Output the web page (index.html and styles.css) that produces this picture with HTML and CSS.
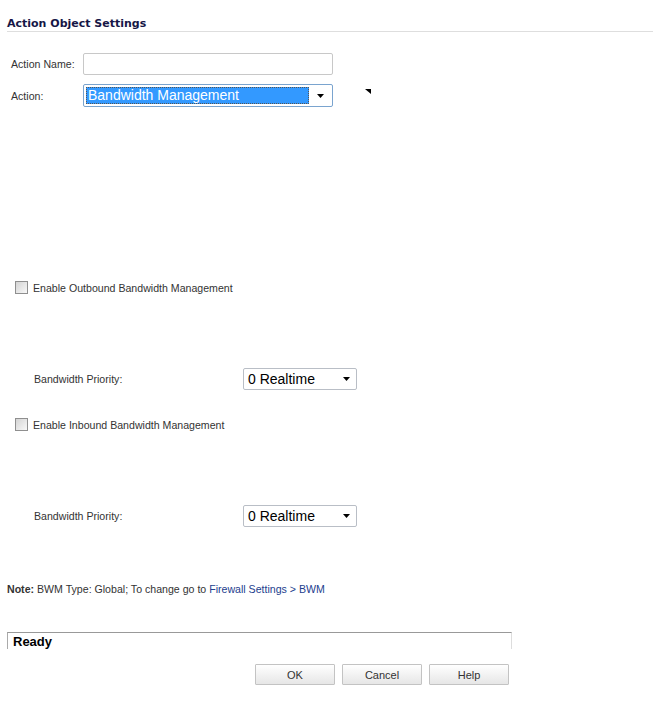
FILE: index.html
```html
<!DOCTYPE html>
<html lang="en">
<head>
  <meta charset="UTF-8">
  <title>Action Object Settings</title>
  <link rel="stylesheet" href="styles.css">
</head>
<body>
  <div class="page">
    <h1 class="title">Action Object Settings</h1>

    <div class="row row-name">
      <span class="label">Action Name:</span>
      <div class="text-input"></div>
    </div>
    <div class="row row-action">
      <span class="label">Action:</span>
      <div class="select select-wide">
        <span class="select-value selected">Bandwidth Management</span>
        <svg class="arrow" width="7" height="4" viewBox="0 0 7 4"><path d="M0 0h7L3.5 4z" fill="#000"/></svg>
      </div>
      <svg class="marker" width="6" height="5" viewBox="0 0 6 5"><path d="M0 0h6v5z" fill="#000"/></svg>
    </div>

    <div class="check-row check-out">
      <span class="checkbox"></span>
      <span class="check-label">Enable Outbound Bandwidth Management</span>
    </div>
    <div class="row row-priority">
      <span class="label label-priority">Bandwidth Priority:</span>
      <div class="select select-small">
        <span class="select-value">0 Realtime</span>
        <svg class="arrow" width="7" height="4" viewBox="0 0 7 4"><path d="M0 0h7L3.5 4z" fill="#000"/></svg>
      </div>
    </div>

    <div class="check-row check-in">
      <span class="checkbox"></span>
      <span class="check-label">Enable Inbound Bandwidth Management</span>
    </div>
    <div class="row row-priority">
      <span class="label label-priority">Bandwidth Priority:</span>
      <div class="select select-small">
        <span class="select-value">0 Realtime</span>
        <svg class="arrow" width="7" height="4" viewBox="0 0 7 4"><path d="M0 0h7L3.5 4z" fill="#000"/></svg>
      </div>
    </div>

    <p class="note"><b>Note:</b> BWM Type: Global; To change go to <a href="#">Firewall Settings &gt; BWM</a></p>

    <div class="status">Ready</div>

    <div class="buttons">
      <button class="btn">OK</button>
      <button class="btn">Cancel</button>
      <button class="btn">Help</button>
    </div>
  </div>
</body>
</html>
```

FILE: styles.css
```css
body {
  margin: 0;
  font-family: "Liberation Sans", Arial, sans-serif;
  font-size: 10.6px;
  color: #333;
  background: #fff;
}
.page {
  width: 653px;
}
.title {
  margin: 0 0 0 7px;
  padding-top: 16px;
  height: 15px;
  line-height: 15px;
  border-bottom: 1px solid #dedede;
  font-family: "DejaVu Sans", Verdana, sans-serif;
  font-size: 11px;
  font-weight: bold;
  color: #161646;
}
.row {
  display: flex;
  align-items: center;
}
.row-name {
  margin-top: 21px;
  height: 22px;
}
.row-action {
  margin-top: 9px;
  height: 23px;
}
.label {
  width: 72px;
  padding-left: 11px;
  flex: none;
}
.label-priority {
  width: 209px;
  padding-left: 34px;
}
.text-input {
  width: 248px;
  height: 20px;
  border: 1px solid #c8c8c8;
  border-radius: 2px;
  background: #fff;
}
.select {
  display: flex;
  align-items: center;
  box-sizing: border-box;
  border: 1px solid #b9bec6;
  border-radius: 2px;
  background: #fff;
  font-size: 14px;
  color: #000;
}
.select-wide {
  width: 250px;
  height: 23px;
  border-color: #7aa4cf;
  padding: 2px;
}
.select-small {
  width: 114px;
  height: 22px;
  padding-left: 4px;
}
.select-value {
  flex: 1;
  line-height: 17px;
}
.selected {
  height: 17px;
  padding-left: 2px;
  background: #3399ff;
  color: #fff;
  outline: 1px dotted #555;
  outline-offset: -1px;
  margin-right: 8px;
}
.arrow {
  margin-right: 6px;
  flex: none;
}
.marker {
  margin-left: 32px;
  margin-top: -9px;
}
.check-row {
  display: flex;
  align-items: center;
  height: 13px;
  padding-left: 15px;
}
.check-out {
  margin-top: 174px;
}
.check-in {
  margin-top: 28px;
}
.checkbox {
  width: 11px;
  height: 11px;
  border: 1px solid #8f8f8f;
  background: linear-gradient(135deg, #d4d4d4, #f8f8f8);
  flex: none;
}
.check-label {
  margin-left: 5px;
}
.row-priority {
  margin-top: 74px;
  height: 22px;
}
.note {
  margin: 56px 0 0 7px;
  line-height: 13px;
}
.note a {
  color: #23408e;
  text-decoration: none;
}
.status {
  margin: 36px 0 0 7px;
  width: 498px;
  height: 16px;
  padding-left: 5px;
  border-top: 1px solid #999;
  border-left: 1px solid #aaa;
  border-right: 1px solid #ddd;
  font-size: 13px;
  font-weight: bold;
  line-height: 17px;
  color: #000;
}
.buttons {
  display: flex;
  gap: 7px;
  margin: 15px 0 0 255px;
}
.btn {
  width: 80px;
  height: 21px;
  padding: 0;
  border: 1px solid #c3c3c3;
  border-radius: 1px;
  background: linear-gradient(#ffffff, #e6e6e6);
  font-family: "Liberation Sans", Arial, sans-serif;
  font-size: 11px;
  color: #333;
}
```
